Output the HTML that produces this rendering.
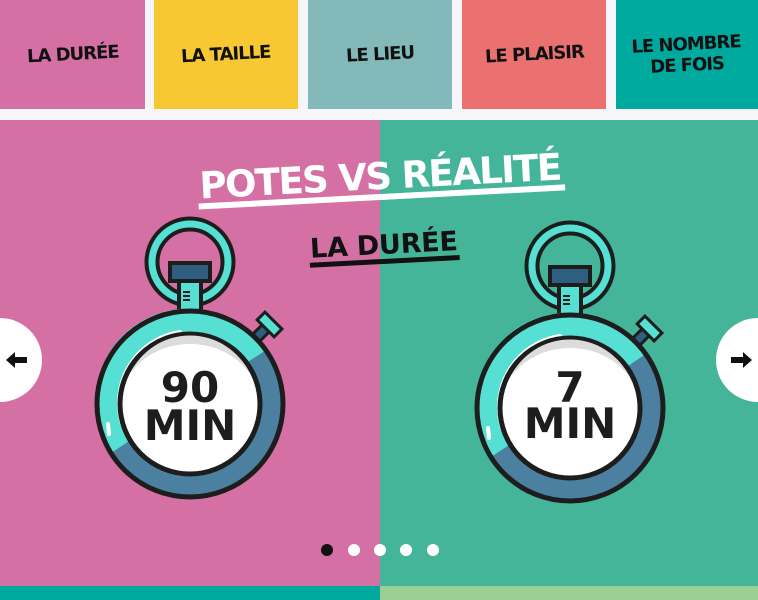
<!DOCTYPE html>
<html><head><meta charset="utf-8"><style>
body{margin:0;width:758px;height:600px;overflow:hidden;background:#f6f5fa;position:relative;font-family:"Liberation Sans",sans-serif}
.t{position:absolute;top:0;height:109px;display:flex;align-items:center;justify-content:center;text-align:center}
.t span{display:block;transform:rotate(-3deg);font-family:"DejaVu Sans",sans-serif;font-weight:bold;font-size:18px;line-height:21px;color:#111;letter-spacing:-1px;transform-origin:center}
</style></head><body>
<div class="t" style="left:0;width:145px;background:#d570a5"><span>LA DURÉE</span></div>
<div class="t" style="left:154px;width:144px;background:#f8c832"><span>LA TAILLE</span></div>
<div class="t" style="left:308px;width:144px;background:#84b9b9"><span>LE LIEU</span></div>
<div class="t" style="left:462px;width:144px;background:#eb7070"><span>LE PLAISIR</span></div>
<div class="t" style="left:616px;width:142px;background:#00a99d"><span>LE NOMBRE<br>DE FOIS</span></div>
<svg style="position:absolute;left:0;top:0" width="758" height="600" viewBox="0 0 758 600">
<defs>
<g id="sw">
 <circle cx="0" cy="-142" r="38" fill="none" stroke="#1d1d1d" stroke-width="15"/>
 <circle cx="0" cy="-142" r="38" fill="none" stroke="#55e0d3" stroke-width="7"/>
 <rect x="-11" y="-126" width="22" height="36" fill="#55e0d3" stroke="#1d1d1d" stroke-width="4"/>
 <path d="M-7,-112h7M-7,-108h7M-7,-104h7" stroke="#1d1d1d" stroke-width="2"/>
 <rect x="-20" y="-141" width="40" height="18" fill="#2e5f80" stroke="#1d1d1d" stroke-width="4"/>
 <g transform="rotate(45)">
  <rect x="-5" y="-108" width="10" height="16" fill="#2e5f80" stroke="#1d1d1d" stroke-width="3"/>
  <rect x="-12" y="-118" width="24" height="11" fill="#55e0d3" stroke="#1d1d1d" stroke-width="3"/>
 </g>
 <circle cx="0" cy="0" r="93" fill="#4b80a1"/>
 <path d="M-79,49 A93 93 0 0 1 76,-54 Z" fill="#55e0d3"/>
 <circle cx="0" cy="0" r="93" fill="none" stroke="#1d1d1d" stroke-width="5"/>
 <path d="M-68,20 A72 72 0 0 1 -10,-72" fill="none" stroke="#fff" stroke-width="4" stroke-linecap="round"/>
 <path d="M-82,20 L-81,30" stroke="#fff" stroke-width="4" stroke-linecap="round"/>
 <circle cx="0" cy="0" r="70" fill="#fff" stroke="#1d1d1d" stroke-width="5"/>
 <path d="M-60,-30 A66 66 0 0 1 60,-30 A70 62 0 0 0 -60,-30Z" fill="#dcdcdc"/>
</g>
</defs>
<rect x="0" y="120" width="380" height="466" fill="#d570a5"/>
<rect x="380" y="120" width="378" height="466" fill="#45b59a"/>
<rect x="0" y="586" width="380" height="14" fill="#00a99d"/>
<rect x="380" y="586" width="378" height="14" fill="#9ccf93"/>
<g transform="rotate(-3 380 170)">
<text x="380" y="189" text-anchor="middle" font-family="DejaVu Sans" font-weight="bold" font-size="37" fill="#fff" letter-spacing="-1" textLength="362">POTES VS RÉALITÉ</text>
<rect x="197" y="194" width="367" height="6" fill="#fff"/>
<text x="380" y="254" text-anchor="middle" font-family="DejaVu Sans" font-weight="bold" font-size="27" fill="#111" textLength="148">LA DURÉE</text>
<rect x="305" y="259" width="150" height="5" fill="#111"/>
</g>
<use href="#sw" transform="translate(190 404)"/>
<use href="#sw" transform="translate(570 408)"/>
<g font-family="DejaVu Sans" font-weight="bold" font-size="42" fill="#1d1d1d" text-anchor="middle">
<text x="190" y="402">90</text>
<text x="190" y="440">MIN</text>
<text x="570" y="402">7</text>
<text x="570" y="438">MIN</text>
</g>
<circle cx="0" cy="360" r="42" fill="#fff"/>
<path d="M6,360 L15,352 V357 H27 V363 H15 V368 Z" fill="#111"/>
<circle cx="758" cy="360" r="42" fill="#fff"/>
<path d="M752,360 L743,352 V357 H731 V363 H743 V368 Z" fill="#111"/>
<circle cx="327" cy="550" r="6" fill="#111"/>
<circle cx="354" cy="550" r="6" fill="#fff"/>
<circle cx="380" cy="550" r="6" fill="#fff"/>
<circle cx="406" cy="550" r="6" fill="#fff"/>
<circle cx="433" cy="550" r="6" fill="#fff"/>
</svg>
</body></html>
